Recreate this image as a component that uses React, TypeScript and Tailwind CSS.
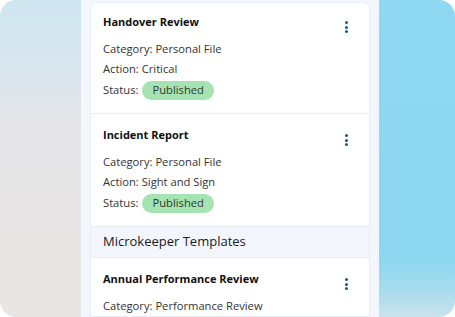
import React from "react";

const font = { fontFamily: '"Open Sans", "Noto Sans", sans-serif' };

function Kebab() {
  return (
    <div className="flex flex-col items-center gap-[1.5px] pt-[7px] w-[6px]">
      <span className="block w-[3px] h-[3px] rounded-full bg-[#1b5c8a]" />
      <span className="block w-[3px] h-[3px] rounded-full bg-[#1b5c8a]" />
      <span className="block w-[3px] h-[3px] rounded-full bg-[#1b5c8a]" />
    </div>
  );
}

function Item({
  title,
  category,
  action,
  status,
  first,
}: {
  title: string;
  category: string;
  action?: string;
  status?: string;
  first?: boolean;
}) {
  return (
    <div
      className={`flex pl-[12px] pr-[20px] ${first ? "pt-[11px]" : "pt-[13px] border-t border-[#e7ecf4]"} pb-[13px]`}
    >
      <div className="flex-1 text-[11.2px] text-[#333]">
        <div className="text-[11px] font-bold text-[#111] leading-[16px]">{title}</div>
        <div className="mt-[9px] leading-[20px]">Category: {category}</div>
        {action && <div className="leading-[20px]">Action: {action}</div>}
        {status && (
          <div className="flex items-center h-[20px] mt-[1px]">
            <span>Status:</span>
            <span className="ml-[4px] inline-flex items-center h-[19px] px-[10px] rounded-full bg-[#a6e3b2] text-[#2c3a30]">
              {status}
            </span>
          </div>
        )}
      </div>
      <Kebab />
    </div>
  );
}

export default function App() {
  return (
    <div className="w-[455px] h-[317px] bg-white" style={font}>
      <div className="w-[455px] h-[317px] rounded-[16px] overflow-hidden flex">
        <div className="w-[81px] h-full bg-[linear-gradient(180deg,#cfe5f1_0%,#d8e6ee_20%,#e6e5e8_42%,#e9e5e2_100%)]" />
        <div className="w-[298px] h-full bg-[#f3f6fd] px-[9px] pt-[2px]">
          <div className="bg-white rounded-t-[8px] border border-[#e8edf6] h-full overflow-hidden">
            <Item
              first
              title="Handover Review"
              category="Personal File"
              action="Critical"
              status="Published"
            />
            <Item
              title="Incident Report"
              category="Personal File"
              action="Sight and Sign"
              status="Published"
            />
            <div className="h-[31px] bg-[#f3f6fd] border-t border-[#e7ecf4] flex items-center pl-[12px] text-[13px] font-medium text-[#1a1a1a]">
              Microkeeper Templates
            </div>
            <Item
              title="Annual Performance Review"
              category="Performance Review"
            />
          </div>
        </div>
        <div className="flex-1 h-full bg-[linear-gradient(180deg,#8ed9f1_0%,#8dd8f0_82%,#a9dced_92%,#c9e3ec_100%)]" />
      </div>
    </div>
  );
}
